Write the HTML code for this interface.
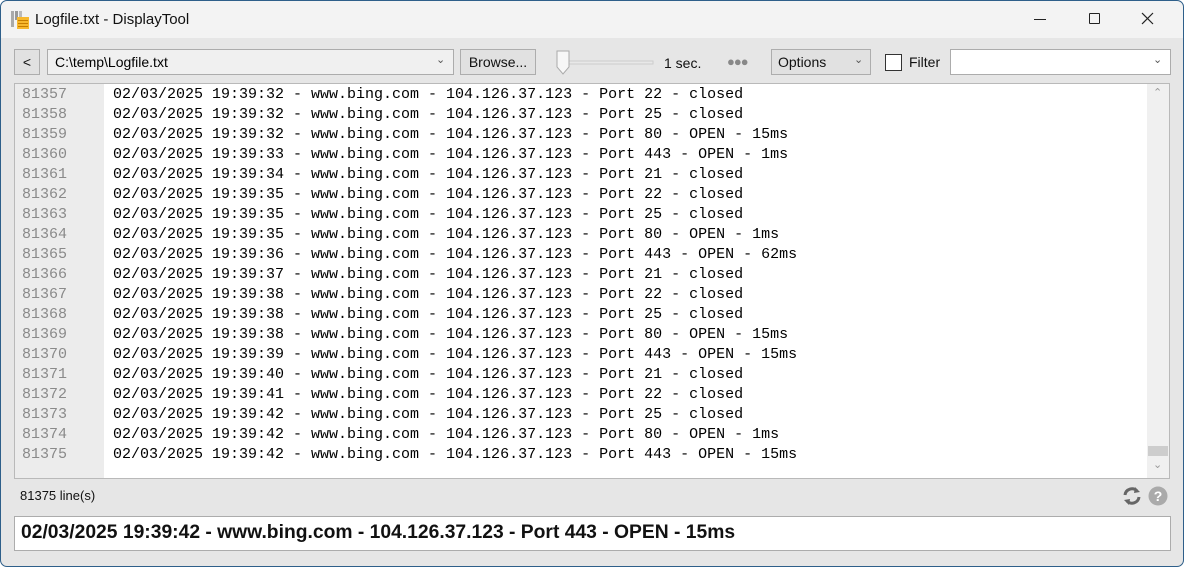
<!DOCTYPE html>
<html><head><meta charset="utf-8"><style>
*{margin:0;padding:0;box-sizing:border-box}
body{width:1184px;height:567px;background:#fff;font-family:"Liberation Sans",sans-serif;overflow:hidden;position:relative}
.win{position:absolute;left:0;top:0;width:1184px;height:567px;border-radius:7px;background:#e6e6e6;overflow:hidden}
.frame{position:absolute;left:0;top:0;width:1184px;height:567px;border:1px solid #2e5f8a;border-radius:7px;pointer-events:none}
.title{position:absolute;left:0;top:0;width:1184px;height:38px;background:#f3f3f3}
.title .t{position:absolute;left:35px;top:11px;font-size:15px;color:#111}
.abs{position:absolute}
.btn{position:absolute;background:#e1e1e1;border:1px solid #adadad;font-size:14px;color:#111;line-height:24px;text-align:center}
.box{position:absolute;background:#fff;border:1px solid #acacac}
.log{position:absolute;left:14px;top:83px;width:1156px;height:396px;background:#fff;border:1px solid #b9b9b9}
.gut{position:absolute;left:0;top:0;width:89px;height:394px;background:#ececec}
.lines{position:absolute;left:0;top:1px;font-family:"Liberation Mono",monospace;font-size:15px;line-height:20px;white-space:pre}
.lines .n{display:inline-block;width:98px;padding-left:7px;color:#8a8a8a}
.sb{position:absolute;right:0;top:0;width:22px;height:394px;background:#f0f0f0}
</style></head><body>
<div class="win">
<div class="title">
 <svg class="abs" style="left:11px;top:11px" width="18" height="18"><rect x="0" y="0" width="3" height="16" fill="#aaa"/><rect x="4" y="0" width="3" height="9" fill="#999"/><rect x="8" y="0" width="3" height="7" fill="#bbb"/><rect x="6" y="6" width="12" height="12" fill="#f7b82e"/><rect x="7" y="9" width="10" height="1" fill="#c77d00"/><rect x="7" y="12" width="10" height="1" fill="#c77d00"/><rect x="7" y="15" width="10" height="1" fill="#c77d00"/></svg>
 <div class="t">Logfile.txt - DisplayTool</div>
 <div class="abs" style="left:1034px;top:19px;width:12px;height:1px;background:#222"></div>
 <div class="abs" style="left:1089px;top:13px;width:11px;height:11px;border:1px solid #222;border-radius:1px"></div>
 <svg class="abs" style="left:1141px;top:12px" width="13" height="13"><path d="M1 1L12 12M12 1L1 12" stroke="#222" stroke-width="1.2"/></svg>
</div>
<div class="btn" style="left:14px;top:49px;width:26px;height:26px">&lt;</div>
<div class="box" style="left:47px;top:49px;width:407px;height:26px;background:#f0f0f0"><span class="abs" style="left:7px;top:4px;font-size:14px">C:\temp\Logfile.txt</span><span class="abs" style="left:388px;top:3px;font-size:11px;color:#555">&#8964;</span></div>
<div class="btn" style="left:460px;top:49px;width:76px;height:26px">Browse...</div>
<svg class="abs" style="left:555px;top:50px" width="100" height="26"><rect x="8" y="11" width="90" height="3" fill="#e8e8e8" stroke="#ccc"/><path d="M2 1H14V17L8 24L2 17Z" fill="#f7f7f7" stroke="#aaa"/></svg>
<div class="abs" style="left:664px;top:55px;font-size:14px;color:#111">1 sec.</div>
<div class="abs" style="left:727px;top:54px;font-size:13px;color:#888;letter-spacing:-1px">●●●</div>
<div class="btn" style="left:771px;top:49px;width:100px;height:26px;text-align:left;padding-left:6px">Options<span class="abs" style="left:82px;top:-2px;font-size:11px;color:#555">&#8964;</span></div>
<div class="abs" style="left:885px;top:54px;width:17px;height:17px;border:1px solid #333;background:#fff"></div>
<div class="abs" style="left:909px;top:54px;font-size:14px;color:#111">Filter</div>
<div class="box" style="left:950px;top:49px;width:221px;height:26px"><span class="abs" style="left:202px;top:3px;font-size:11px;color:#555">&#8964;</span></div>
<div class="log">
 <div class="gut"></div>
 <div class="lines"><span class="n">81357</span>02/03/2025 19:39:32 - www.bing.com - 104.126.37.123 - Port 22 - closed
<span class="n">81358</span>02/03/2025 19:39:32 - www.bing.com - 104.126.37.123 - Port 25 - closed
<span class="n">81359</span>02/03/2025 19:39:32 - www.bing.com - 104.126.37.123 - Port 80 - OPEN - 15ms
<span class="n">81360</span>02/03/2025 19:39:33 - www.bing.com - 104.126.37.123 - Port 443 - OPEN - 1ms
<span class="n">81361</span>02/03/2025 19:39:34 - www.bing.com - 104.126.37.123 - Port 21 - closed
<span class="n">81362</span>02/03/2025 19:39:35 - www.bing.com - 104.126.37.123 - Port 22 - closed
<span class="n">81363</span>02/03/2025 19:39:35 - www.bing.com - 104.126.37.123 - Port 25 - closed
<span class="n">81364</span>02/03/2025 19:39:35 - www.bing.com - 104.126.37.123 - Port 80 - OPEN - 1ms
<span class="n">81365</span>02/03/2025 19:39:36 - www.bing.com - 104.126.37.123 - Port 443 - OPEN - 62ms
<span class="n">81366</span>02/03/2025 19:39:37 - www.bing.com - 104.126.37.123 - Port 21 - closed
<span class="n">81367</span>02/03/2025 19:39:38 - www.bing.com - 104.126.37.123 - Port 22 - closed
<span class="n">81368</span>02/03/2025 19:39:38 - www.bing.com - 104.126.37.123 - Port 25 - closed
<span class="n">81369</span>02/03/2025 19:39:38 - www.bing.com - 104.126.37.123 - Port 80 - OPEN - 15ms
<span class="n">81370</span>02/03/2025 19:39:39 - www.bing.com - 104.126.37.123 - Port 443 - OPEN - 15ms
<span class="n">81371</span>02/03/2025 19:39:40 - www.bing.com - 104.126.37.123 - Port 21 - closed
<span class="n">81372</span>02/03/2025 19:39:41 - www.bing.com - 104.126.37.123 - Port 22 - closed
<span class="n">81373</span>02/03/2025 19:39:42 - www.bing.com - 104.126.37.123 - Port 25 - closed
<span class="n">81374</span>02/03/2025 19:39:42 - www.bing.com - 104.126.37.123 - Port 80 - OPEN - 1ms
<span class="n">81375</span>02/03/2025 19:39:42 - www.bing.com - 104.126.37.123 - Port 443 - OPEN - 15ms</div>
 <div class="sb"><span class="abs" style="left:6px;top:2px;font-size:11px;color:#999">&#8963;</span><div class="abs" style="left:1px;top:362px;width:20px;height:10px;background:#cdcdcd"></div><span class="abs" style="left:6px;top:374px;font-size:11px;color:#999">&#8964;</span></div>
</div>
<div class="abs" style="left:20px;top:488px;font-size:13px;color:#111">81375 line(s)</div>
<svg class="abs" style="left:1122px;top:486px" width="48" height="20"><path d="M3 9A7 7 0 0 1 15 5M17 11A7 7 0 0 1 5 15" stroke="#666" stroke-width="3" fill="none"/><path d="M13 1L18 6L12 7Z M7 19L2 14L8 13Z" fill="#666"/><circle cx="36" cy="10" r="9.5" fill="#aaa"/><text x="36" y="15" font-size="14" font-weight="bold" fill="#fff" text-anchor="middle" font-family="Liberation Sans">?</text></svg>
<div class="box" style="left:14px;top:516px;width:1157px;height:35px"><span class="abs" style="left:6px;top:5px;font-size:19.3px;font-weight:bold;color:#111">02/03/2025 19:39:42 - www.bing.com - 104.126.37.123 - Port 443 - OPEN - 15ms</span></div>
</div>
<div class="frame"></div>
</body></html>
